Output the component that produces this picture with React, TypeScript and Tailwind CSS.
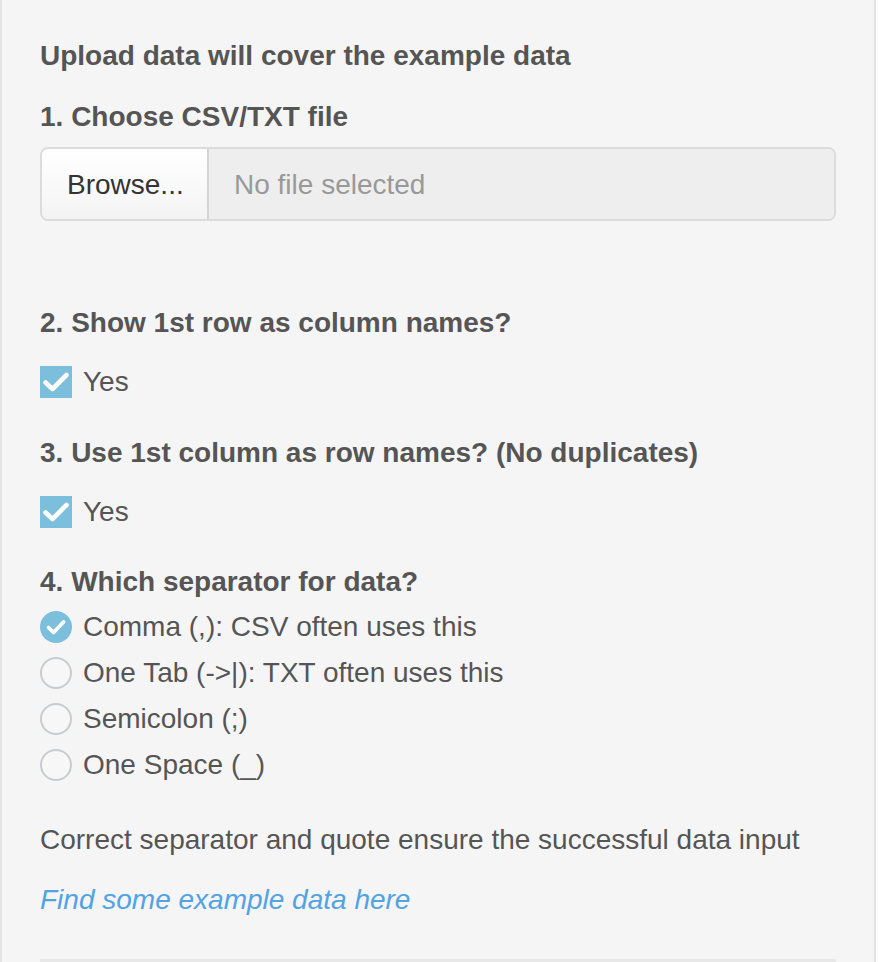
import { useState } from 'react';

const SEPARATORS = [
  { value: ',', label: 'Comma (,): CSV often uses this' },
  { value: '\t', label: 'One Tab (->|): TXT often uses this' },
  { value: ';', label: 'Semicolon (;)' },
  { value: ' ', label: 'One Space (_)' },
];

function BoxCheck() {
  return (
    <svg width="32" height="32" viewBox="0 0 32 32" fill="none">
      <polyline points="5.5,16.5 12.5,23 26.5,9" stroke="white" strokeWidth="4.6" strokeLinecap="round" strokeLinejoin="round" />
    </svg>
  );
}

function RadioCheck() {
  return (
    <svg width="32" height="32" viewBox="0 0 32 32" fill="none">
      <polyline points="8.5,16.5 13.5,21.5 23.5,11" stroke="white" strokeWidth="3.8" strokeLinecap="round" strokeLinejoin="round" />
    </svg>
  );
}

function CheckRow({ checked, onToggle }: { checked: boolean; onToggle: () => void }) {
  return (
    <label onClick={onToggle} className="flex items-center gap-[11px] h-[40px] cursor-pointer">
      <span className={`w-[32px] h-[32px] flex items-center justify-center ${checked ? 'bg-[#7bbfdd]' : 'bg-white border-2 border-[#c5c9cc]'}`}>
        {checked && <BoxCheck />}
      </span>
      <span className="text-[28px] leading-[40px] text-[#555]">Yes</span>
    </label>
  );
}

export default function App() {
  const [header, setHeader] = useState(true);
  const [rowNames, setRowNames] = useState(true);
  const [sep, setSep] = useState(',');

  return (
    <div className="bg-white min-h-[962px]" style={{ fontFamily: '"Liberation Sans", Arial, Helvetica, sans-serif' }}>
      <div className="w-[876px] h-[962px] overflow-hidden bg-[#f5f5f5] border-x-2 border-[#e3e3e3] px-[38px] pt-[36px] text-[#555]">
        <h4 className="text-[28px] leading-[40px] font-bold">Upload data will cover the example data</h4>

        {/* file input */}
        <div className="mt-[21px]">
          <div className="text-[28px] leading-[40px] font-bold mb-[10px]">1. Choose CSV/TXT file</div>
          <div className="flex h-[74px] rounded-[8px] border-2 border-[#dcdcdc] overflow-hidden">
            <button className="w-[167px] border-r-2 border-[#d4d4d4] bg-gradient-to-b from-white to-[#f4f4f4] text-[28px] text-[#333] text-left pl-[25px] pt-[2px]">
              Browse...
            </button>
            <div className="flex-1 bg-[#eeeeee] flex items-center pl-[25px] pt-[2px] text-[28px] text-[#999]">No file selected</div>
          </div>
        </div>

        <div className="mt-[82px]">
          <div className="text-[28px] leading-[40px] font-bold mb-[19px]">2. Show 1st row as column names?</div>
          <CheckRow checked={header} onToggle={() => setHeader(!header)} />
        </div>

        <div className="mt-[31px]">
          <div className="text-[28px] leading-[40px] font-bold mb-[19px]">3. Use 1st column as row names? (No duplicates)</div>
          <CheckRow checked={rowNames} onToggle={() => setRowNames(!rowNames)} />
        </div>

        <div className="mt-[30px]">
          <div className="text-[28px] leading-[40px] font-bold mb-[2px]">4. Which separator for data?</div>
          {SEPARATORS.map((s) => (
            <label key={s.label} onClick={() => setSep(s.value)} className="flex items-center gap-[11px] h-[46px] cursor-pointer">
              <span className={`w-[32px] h-[32px] rounded-full flex items-center justify-center ${sep === s.value ? 'bg-[#7bbfdd]' : 'bg-[#f7f7f7] border-2 border-[#c8ccd0]'}`}>
                {sep === s.value && <RadioCheck />}
              </span>
              <span className="text-[28px] leading-[40px]">{s.label}</span>
            </label>
          ))}
        </div>

        <p className="mt-[32px] text-[28px] leading-[40px]">Correct separator and quote ensure the successful data input</p>
        <a href="#" className="block mt-[20px] text-[28px] leading-[40px] italic text-[#52a3e4]">Find some example data here</a>

        <div className="mt-[39px] h-[3px] bg-[#e8e8e8]" />
      </div>
    </div>
  );
}
